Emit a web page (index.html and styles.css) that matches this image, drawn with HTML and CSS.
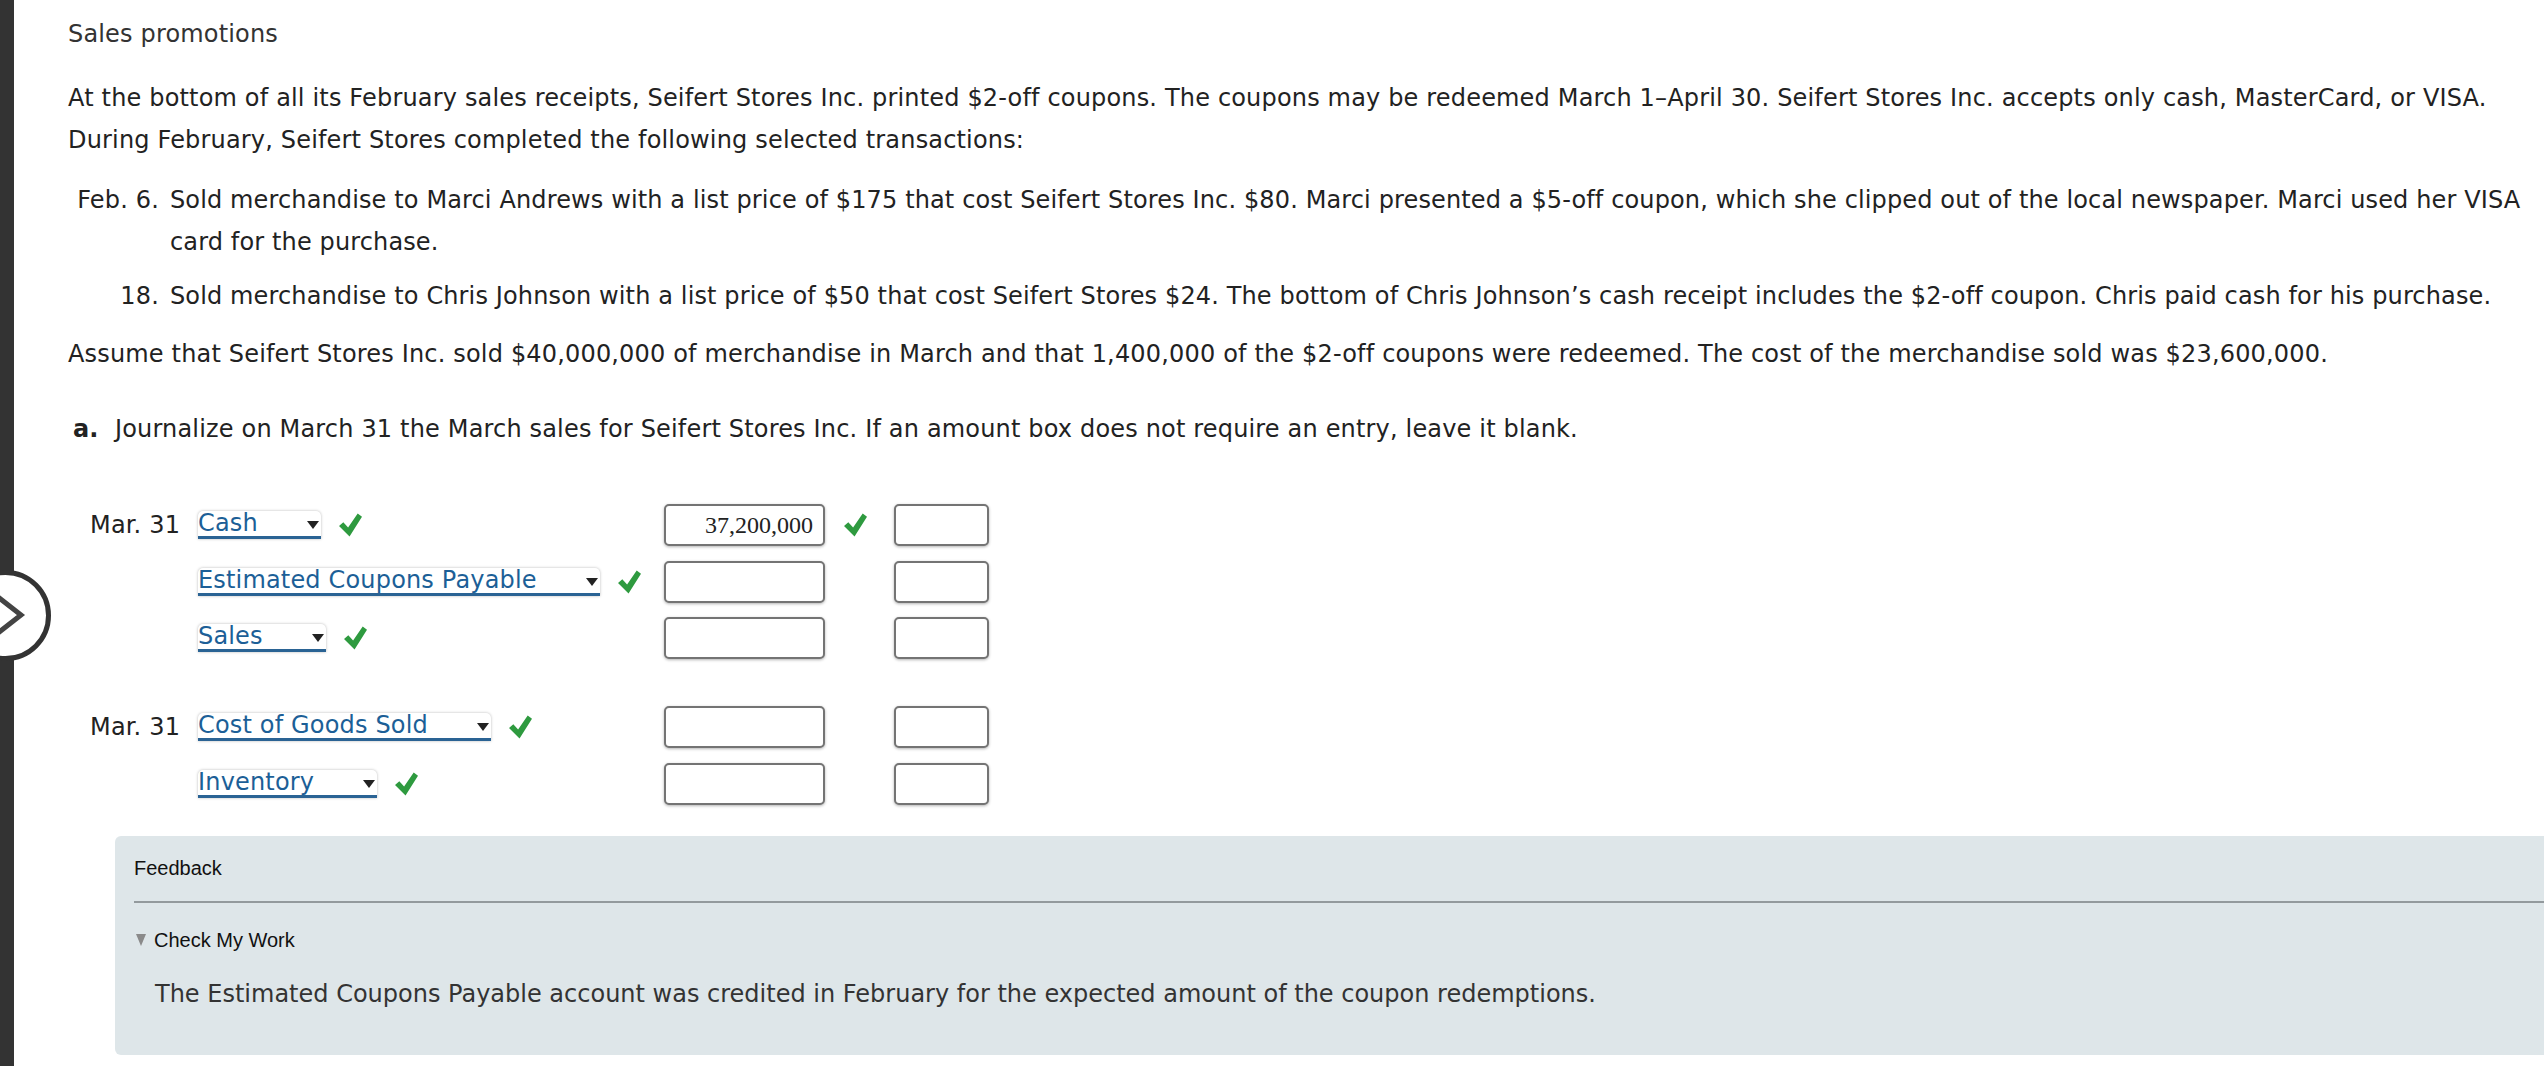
FILE: index.html
```html
<!DOCTYPE html>
<html lang="en">
<head>
<meta charset="utf-8">
<title>Sales promotions</title>
<link rel="stylesheet" href="styles.css">
</head>
<body>
<div class="page">
  <aside class="rail"></aside>
  <button class="rail-toggle" aria-label="Open navigation">
    <svg width="81" height="81" viewBox="0 0 81 81" aria-hidden="true"><polyline points="33,22 56,40 33,58" fill="none" stroke="#444" stroke-width="5"/></svg>
  </button>
  <main class="content">
    <h1 class="title">Sales promotions</h1>
    <p class="intro">At the bottom of all its February sales receipts, Seifert Stores Inc. printed $2-off coupons. The coupons may be redeemed March 1–April 30. Seifert Stores Inc. accepts only cash, MasterCard, or VISA. During February, Seifert Stores completed the following selected transactions:</p>
    <div class="trans">
      <div class="trans-date">Feb. 6.</div>
      <div class="trans-text">Sold merchandise to Marci Andrews with a list price of $175 that cost Seifert Stores Inc. $80. Marci presented a $5-off coupon, which she clipped out of the local newspaper. Marci used her VISA card for the purchase.</div>
      <div class="trans-date">18.</div>
      <div class="trans-text">Sold merchandise to Chris Johnson with a list price of $50 that cost Seifert Stores $24. The bottom of Chris Johnson’s cash receipt includes the $2-off coupon. Chris paid cash for his purchase.</div>
    </div>
    <p class="assume">Assume that Seifert Stores Inc. sold $40,000,000 of merchandise in March and that 1,400,000 of the $2-off coupons were redeemed. The cost of the merchandise sold was $23,600,000.</p>
    <p class="task"><span class="task-letter">a.</span>Journalize on March 31 the March sales for Seifert Stores Inc. If an amount box does not require an entry, leave it blank.</p>

    <div class="journal">
      <div class="entry">
        <div class="jrow">
          <div class="jdate">Mar. 31</div>
          <div class="jacct"><span class="select">Cash<span class="caret"></span></span><svg class="check" viewBox="0 0 24 24"><path d="M0 13 L4.5 9 L9.5 14.5 L19.5 0 L24 3.5 L11 24 Z"/></svg></div>
          <input class="amt debit" type="text" value="37,200,000" readonly>
          <div class="jcheck"><svg class="check" viewBox="0 0 24 24"><path d="M0 13 L4.5 9 L9.5 14.5 L19.5 0 L24 3.5 L11 24 Z"/></svg></div>
          <input class="amt credit" type="text" value="" readonly>
        </div>
        <div class="jrow">
          <div class="jdate"></div>
          <div class="jacct"><span class="select">Estimated Coupons Payable<span class="caret"></span></span><svg class="check" viewBox="0 0 24 24"><path d="M0 13 L4.5 9 L9.5 14.5 L19.5 0 L24 3.5 L11 24 Z"/></svg></div>
          <input class="amt debit" type="text" value="" readonly>
          <div class="jcheck"></div>
          <input class="amt credit" type="text" value="" readonly>
        </div>
        <div class="jrow">
          <div class="jdate"></div>
          <div class="jacct"><span class="select">Sales<span class="caret"></span></span><svg class="check" viewBox="0 0 24 24"><path d="M0 13 L4.5 9 L9.5 14.5 L19.5 0 L24 3.5 L11 24 Z"/></svg></div>
          <input class="amt debit" type="text" value="" readonly>
          <div class="jcheck"></div>
          <input class="amt credit" type="text" value="" readonly>
        </div>
      </div>
      <div class="entry">
        <div class="jrow">
          <div class="jdate">Mar. 31</div>
          <div class="jacct"><span class="select">Cost of Goods Sold<span class="caret"></span></span><svg class="check" viewBox="0 0 24 24"><path d="M0 13 L4.5 9 L9.5 14.5 L19.5 0 L24 3.5 L11 24 Z"/></svg></div>
          <input class="amt debit" type="text" value="" readonly>
          <div class="jcheck"></div>
          <input class="amt credit" type="text" value="" readonly>
        </div>
        <div class="jrow">
          <div class="jdate"></div>
          <div class="jacct"><span class="select">Inventory<span class="caret"></span></span><svg class="check" viewBox="0 0 24 24"><path d="M0 13 L4.5 9 L9.5 14.5 L19.5 0 L24 3.5 L11 24 Z"/></svg></div>
          <input class="amt debit" type="text" value="" readonly>
          <div class="jcheck"></div>
          <input class="amt credit" type="text" value="" readonly>
        </div>
      </div>
    </div>

    <section class="feedback">
      <div class="fb-title">Feedback</div>
      <div class="fb-rule"></div>
      <div class="fb-check"><span class="fb-tri"></span>Check My Work</div>
      <p class="fb-text">The Estimated Coupons Payable account was credited in February for the expected amount of the coupon redemptions.</p>
    </section>
  </main>
</div>
</body>
</html>
```
FILE: styles.css
```css
html, body {
  margin: 0;
  padding: 0;
  background: #fff;
  overflow: hidden;
}
body {
  font-family: "DejaVu Sans", Verdana, sans-serif;
  font-size: 24px;
  letter-spacing: 0.17px;
  color: #222;
}
.page {
  position: relative;
  display: flex;
  min-height: 1066px;
}
.rail {
  flex: none;
  width: 14px;
  background: #333;
}
.rail-toggle {
  position: absolute;
  left: -40px;
  top: 570px;
  width: 91px;
  height: 91px;
  box-sizing: border-box;
  padding: 0;
  border: 5px solid #333;
  border-radius: 50%;
  background: #fff;
  overflow: hidden;
}
.rail-toggle svg {
  display: block;
  filter: blur(0.7px);
}
.content {
  flex: 1;
  min-width: 0;
  padding: 13px 8px 0 54px;
}
.title {
  margin: 0;
  font-size: 24px;
  font-weight: normal;
  line-height: 42px;
  color: #333;
}
.intro {
  margin: 22px 0 0;
  line-height: 42px;
}
.trans {
  display: grid;
  grid-template-columns: 91px 1fr;
  column-gap: 11px;
  row-gap: 12px;
  margin-top: 18px;
  line-height: 42px;
}
.trans-date {
  text-align: right;
}
.trans-text {
  letter-spacing: 0.13px;
}
.assume {
  margin: 16px 0 0;
  line-height: 42px;
}
.task {
  margin: 33px 0 0;
  line-height: 42px;
}
.task-letter {
  display: inline-block;
  width: 47px;
  padding-left: 5px;
  box-sizing: border-box;
  font-weight: bold;
}
.journal {
  display: flex;
  flex-direction: column;
  gap: 47px;
  margin: 54px 0 0 22px;
}
.entry {
  display: flex;
  flex-direction: column;
  gap: 14.5px;
}
.jrow {
  display: grid;
  grid-template-columns: 108px 466px 161px 69px 95px;
  align-items: center;
  height: 42px;
}
.jdate {
  white-space: nowrap;
}
.jacct {
  display: flex;
  align-items: center;
  gap: 18px;
}
.select {
  position: relative;
  display: inline-block;
  height: 25px;
  line-height: 25px;
  padding-right: 63px;
  background: #fff;
  color: #1c5f97;
  border-bottom: 3px solid #2a6394;
  border-radius: 5px 5px 0 0;
  box-shadow: 0 0 3px rgba(0, 0, 0, 0.28);
  white-space: nowrap;
}
.caret {
  position: absolute;
  right: 2px;
  top: 10px;
  width: 0;
  height: 0;
  border-left: 6px solid transparent;
  border-right: 6px solid transparent;
  border-top: 8px solid #222;
}
.check {
  display: block;
  width: 23px;
  height: 24px;
  fill: #2e9a3f;
}
.jcheck {
  padding-left: 19px;
}
.amt {
  box-sizing: border-box;
  height: 42px;
  margin: 0;
  padding: 0 10px;
  border: 2px solid #747474;
  border-radius: 5px;
  box-shadow: 0 1px 3px rgba(0, 0, 0, 0.3);
  background: #fff;
  font-family: "Liberation Serif", "Times New Roman", serif;
  font-size: 24px;
  letter-spacing: 0;
  color: #222;
  text-align: right;
  outline: none;
}
.debit {
  width: 161px;
}
.credit {
  width: 95px;
}
.feedback {
  margin: 31px -40px 0 47px;
  padding: 21px 0 40px 19px;
  background: #dee6e9;
  border-radius: 6px;
}
.fb-title {
  font-family: "Liberation Sans", Arial, sans-serif;
  font-size: 20px;
  letter-spacing: 0;
  line-height: 23px;
  color: #111;
}
.fb-rule {
  margin-top: 21px;
  border-top: 2px solid #939a9d;
}
.fb-check {
  display: flex;
  align-items: center;
  margin-top: 26px;
  font-family: "Liberation Sans", Arial, sans-serif;
  font-size: 20px;
  letter-spacing: 0;
  line-height: 23px;
  color: #111;
}
.fb-tri {
  width: 0;
  height: 0;
  margin: 0 8px 0 2px;
  border-left: 5.5px solid transparent;
  border-right: 5.5px solid transparent;
  border-top: 12px solid #8a8a8a;
}
.fb-text {
  margin: 21px 0 0;
  padding-left: 21px;
  line-height: 42px;
  letter-spacing: 0;
  color: #333;
}
```
